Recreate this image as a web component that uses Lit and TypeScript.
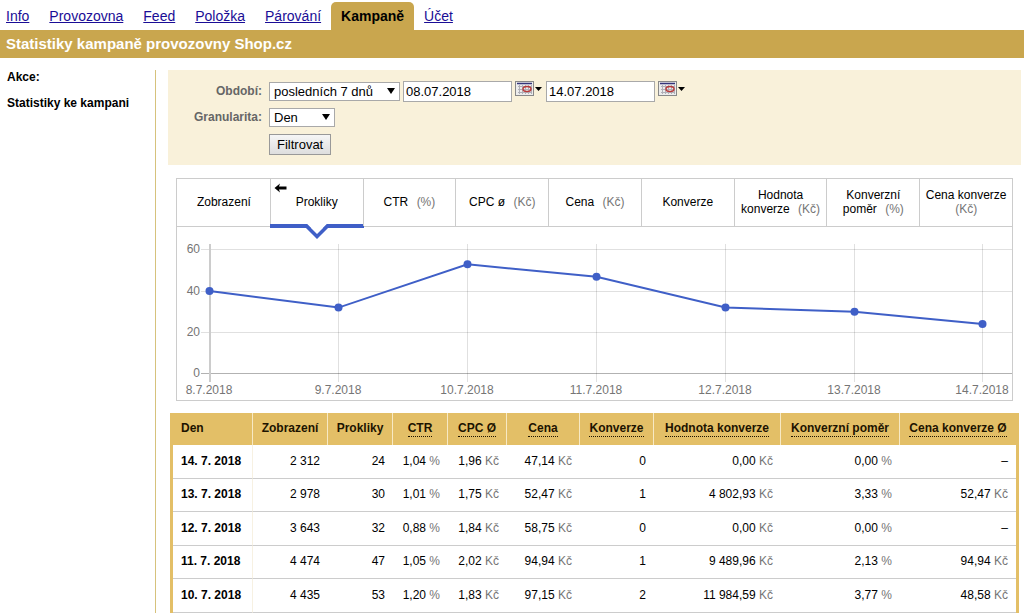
import { LitElement, html, css, svg, nothing } from "lit";
import { customElement, state } from "lit/decorators.js";

interface Metric { lines: string[]; unit?: string; }
interface Column { label: string; hint: boolean; width: number; cls?: string; }

const NAV = ["Info", "Provozovna", "Feed", "Položka", "Párování", "Kampaně", "Účet"];

const METRICS: Metric[] = [
  { lines: ["Zobrazení"] },
  { lines: ["Prokliky"] },
  { lines: ["CTR"], unit: "(%)" },
  { lines: ["CPC ø"], unit: "(Kč)" },
  { lines: ["Cena"], unit: "(Kč)" },
  { lines: ["Konverze"] },
  { lines: ["Hodnota", "konverze"], unit: "(Kč)" },
  { lines: ["Konverzní", "poměr"], unit: "(%)" },
  { lines: ["Cena konverze", ""], unit: "(Kč)" },
];

const COLUMNS: Column[] = [
  { label: "Den", hint: false, width: 80, cls: "left" },
  { label: "Zobrazení", hint: false, width: 75 },
  { label: "Prokliky", hint: false, width: 65 },
  { label: "CTR", hint: true, width: 55 },
  { label: "CPC Ø", hint: true, width: 59 },
  { label: "Cena", hint: true, width: 73 },
  { label: "Konverze", hint: true, width: 74 },
  { label: "Hodnota konverze", hint: true, width: 127 },
  { label: "Konverzní poměr", hint: true, width: 119 },
  { label: "Cena konverze Ø", hint: true, width: 116 },
];
const TOTAL_WIDTH = COLUMNS.reduce((sum, c) => sum + c.width, 0);

const ROWS: string[][] = [
  ["14. 7. 2018", "2 312", "24", "1,04 %", "1,96 Kč", "47,14 Kč", "0", "0,00 Kč", "0,00 %", "–"],
  ["13. 7. 2018", "2 978", "30", "1,01 %", "1,75 Kč", "52,47 Kč", "1", "4 802,93 Kč", "3,33 %", "52,47 Kč"],
  ["12. 7. 2018", "3 643", "32", "0,88 %", "1,84 Kč", "58,75 Kč", "0", "0,00 Kč", "0,00 %", "–"],
  ["11. 7. 2018", "4 474", "47", "1,05 %", "2,02 Kč", "94,94 Kč", "1", "9 489,96 Kč", "2,13 %", "94,94 Kč"],
  ["10. 7. 2018", "4 435", "53", "1,20 %", "1,83 Kč", "97,15 Kč", "2", "11 984,59 Kč", "3,77 %", "48,58 Kč"],
];

const CLICKS = [
  { day: "8.7.2018", value: 40 },
  { day: "9.7.2018", value: 32 },
  { day: "10.7.2018", value: 53 },
  { day: "11.7.2018", value: 47 },
  { day: "12.7.2018", value: 32 },
  { day: "13.7.2018", value: 30 },
  { day: "14.7.2018", value: 24 },
];

@customElement("clicks-chart")
export class ClicksChart extends LitElement {
  static styles = css`
    :host { display: block; }
    .plot { display: block; width: 100%; height: auto; }
    .grid { stroke: #000; stroke-opacity: 0.12; }
    .axis { stroke: #000; stroke-opacity: 0.3; }
    .axis-y { stroke: #ccc; stroke-width: 2; }
    .line { fill: none; stroke: #3f5fc7; stroke-width: 2; }
    .dot { fill: #3f5fc7; }
    .tick { fill: #757575; font: 12px "Liberation Sans", Arial, sans-serif; }
  `;

  render() {
    const x = (i: number) => Math.round(32 + i * 128.9);
    const y = (v: number) => 146.5 - v * 2.06;
    return html`
      <svg class="plot" viewBox="0 0 835 173" role="img" aria-label="Prokliky">
        ${[0, 20, 40, 60].map((v) => svg`
          <line class=${v ? "grid" : "axis"} x1="24" x2="835" y1=${Math.floor(y(v)) + 0.5} y2=${Math.floor(y(v)) + 0.5}></line>
          <text class="tick" x="23" y=${Math.floor(y(v)) + 4} text-anchor="end">${v}</text>`)}
        <line class="axis-y" x1="33" x2="33" y1="17" y2="155"></line>
        ${CLICKS.map((p, i) => svg`
          ${i ? svg`<line class="grid" x1=${x(i) + 0.5} x2=${x(i) + 0.5} y1="17" y2="155"></line>` : nothing}
          <text class="tick" x=${x(i)} y="167" text-anchor="middle">${p.day}</text>`)}
        <polyline class="line" points=${CLICKS.map((p, i) => `${x(i) + 0.5},${y(p.value)}`).join(" ")}></polyline>
        ${CLICKS.map((p, i) => svg`<circle class="dot" cx=${x(i) + 0.5} cy=${y(p.value)} r="4"></circle>`)}
      </svg>`;
  }
}

@customElement("app-root")
export class AppRoot extends LitElement {
  @state() private selected = 1;

  static styles = css`
    :host {
      display: block;
      min-height: 100vh;
      background: #fff;
      color: #000;
      font: 12px/14px "Liberation Sans", Arial, sans-serif;
    }
    *, *::before, *::after { box-sizing: border-box; }
    .nav { display: flex; align-items: flex-end; padding: 2px 0 0 6px; height: 30px; gap: 20px; font-size: 14px; line-height: 28px; }
    .nav a { color: #1a0d96; }
    .nav .current {
      margin: 0 -10px;
      padding: 0 10px;
      border-radius: 5px 5px 0 0;
      background: #c9a64e;
      color: #000;
      font-weight: bold;
      text-decoration: none;
    }
    .title { margin: 0; padding: 0 6px; background: #c9a64e; color: #fff; font-size: 15px; line-height: 28px; }
    .body { display: flex; margin-top: 12px; }
    .side { flex: 0 0 156px; padding: 0 7px; border-right: 1px solid #d6c27c; font-weight: bold; }
    .side h2 { margin: 0 0 12px; font-size: 12px; line-height: 14px; }
    .side a { color: #000; text-decoration: none; }
    .main { flex: 1; min-width: 0; padding: 0 3px 0 12px; }
    .filter {
      display: grid;
      grid-template-columns: 94px 1fr;
      grid-template-rows: 22px 20px 24px;
      gap: 5px 7px;
      align-items: center;
      height: 95px;
      padding-top: 10px;
      align-content: start;
      background: #f9f1da;
    }
    .filter label { color: #666; font-weight: bold; text-align: right; }
    .fields { display: flex; align-items: center; gap: 3px; }
    .fields input, .fields select, .fields button { font: 13px "Liberation Sans", Arial, sans-serif; color: #000; }
    .pick { position: relative; display: flex; }
    .pick::after {
      content: "";
      position: absolute;
      right: 5px;
      top: 6px;
      border: 4px solid transparent;
      border-top: 6px solid #000;
      border-bottom: 0;
      pointer-events: none;
    }
    .pick select { appearance: none; height: 19px; padding: 0 4px; border: 1px solid #a9a9a9; border-radius: 0; background: #fff; }
    .period { width: 131px; }
    .step { width: 66px; }
    .date { width: 109px; height: 21px; padding: 0 2px; border: 1px solid #a9a9a9; }
    .calendar { display: flex; margin: -5px 0 0; padding: 0; border: 0; background: none; }
    .submit { height: 21px; padding: 0 7px; border: 1px solid #999; background: linear-gradient(#f6f6f6, #dedede); }
    .panel { margin: 13px 8px 12px; border: 1px solid #ccc; }
    .tabs { display: flex; height: 48px; border-bottom: 1px solid #ccc; }
    .tab {
      position: relative;
      flex: 1 1 0;
      min-width: 0;
      padding: 0 0 2px;
      border: 0;
      border-left: 1px solid #ccc;
      background: none;
      color: #000;
      font: 12px/14px "Liberation Sans", Arial, sans-serif;
      white-space: nowrap;
    }
    .tab:first-child { border-left-color: transparent; }
    .unit { color: #757575; }
    .word + .unit { margin-left: 5px; }
    .arrow { position: absolute; left: 3px; top: 4px; }
    .notch { position: absolute; left: 50%; bottom: -13px; margin-left: -12px; }
    .bar { position: absolute; left: -1px; right: -1px; bottom: -2px; height: 4px; background: #3f5fc7; }
    .data { width: calc(100% - 4px); margin: 0 2px; border-collapse: separate; border-spacing: 0; table-layout: fixed; border: solid #e3bf67; border-width: 0 3px; }
    .data th, .data td { padding: 0 8px 2px; text-align: right; white-space: nowrap; }
    .data thead th { height: 32px; padding: 0 0 2px; background: #e3bf67; border-right: 1px solid #f7e9c4; text-align: center; color: #1d1300; }
    .data thead th:last-child { border-right: 0; }
    .data .left, .data thead .left { padding-left: 8px; text-align: left; }
    .data tbody tr { height: 34px; }
    .data tbody tr:nth-child(even) { height: 33px; }
    .data tbody td, .data tbody th { border-bottom: 1px solid #ccc; }
    .data tbody th { border-right: 1px solid #f7f1e2; }
    .hint { border-bottom: 1px dotted #1d1300; padding-bottom: 1px; }
  `;

  private calendar(label: string) {
    return html`<button class="calendar" type="button" aria-label=${label}>
      <svg width="28" height="15" viewBox="0 0 28 15">
        <rect x="0.5" y="0.5" width="18" height="14" fill="#ececec" stroke="#888"></rect>
        <path d="M2 2.5h15" stroke="#35357a" stroke-width="1.5"></path>
        <path d="M3 5.5h14M3 8.5h14M3 11.5h14M4.5 4v9M7.5 4v9M10.5 4v9M13.5 4v9M16.5 4v9" stroke="#b0b0b8"></path>
        <ellipse cx="12" cy="8" rx="4" ry="2.5" fill="none" stroke="#b83a3a" stroke-width="1.4"></ellipse>
        <path d="M20 6h7l-3.500 4z" fill="#000"></path>
      </svg>
    </button>`;
  }

  private metric(m: Metric, i: number) {
    const on = i === this.selected;
    return html`<button class="tab" type="button" aria-pressed=${on} @click=${() => (this.selected = i)}>
      ${m.lines.map((line, n) => html`${n ? html`<br>` : nothing}${line ? html`<span class="word">${line}</span>` : nothing}`)}
      ${m.unit ? html`<span class="unit">${m.unit}</span>` : nothing}
      ${on ? html`
        <svg class="arrow" width="13" height="10" viewBox="0 0 13 10"><path d="M0.500 5L6 0.500L5 3.500H12.500V6.500H5L6 9.500Z" fill="#000"></path></svg>
        <span class="bar"></span>
        <svg class="notch" width="24" height="15" viewBox="0 0 24 15">
          <path d="M2 0H22L12 10Z" fill="#fff"></path>
          <path d="M1 1.500L12 12.500L23 1.500" fill="none" stroke="#3f5fc7" stroke-width="3.500"></path>
        </svg>` : nothing}
    </button>`;
  }

  private cell(text: string) {
    const parts = text.match(/^(.*) (Kč|%)$/);
    return parts ? html`${parts[1]} <span class="unit">${parts[2]}</span>` : text;
  }

  render() {
    return html`
      <nav class="nav">
        ${NAV.map((n) => html`<a href="#" class=${n === "Kampaně" ? "current" : ""}>${n}</a>`)}
      </nav>
      <h1 class="title">Statistiky kampaně provozovny Shop.cz</h1>
      <div class="body">
        <aside class="side">
          <h2>Akce:</h2>
          <a href="#">Statistiky ke kampani</a>
        </aside>
        <main class="main">
          <form class="filter" @submit=${(e: Event) => e.preventDefault()}>
            <label for="period">Období:</label>
            <div class="fields">
              <span class="pick"><select id="period" class="period"><option>posledních 7 dnů</option></select></span>
              <input class="date" type="text" aria-label="Od" value="08.07.2018">
              ${this.calendar("Vybrat datum od")}
              <input class="date" type="text" aria-label="Do" value="14.07.2018">
              ${this.calendar("Vybrat datum do")}
            </div>
            <label for="step">Granularita:</label>
            <div class="fields"><span class="pick"><select id="step" class="step"><option>Den</option></select></span></div>
            <span></span>
            <div class="fields"><button class="submit" type="submit">Filtrovat</button></div>
          </form>
          <section class="panel">
            <div class="tabs">${METRICS.map((m, i) => this.metric(m, i))}</div>
            <clicks-chart></clicks-chart>
          </section>
          <table class="data">
            <colgroup>${COLUMNS.map((c) => html`<col style="width:${(c.width / TOTAL_WIDTH) * 100}%">`)}</colgroup>
            <thead>
              <tr>${COLUMNS.map((c) => html`<th scope="col" class=${c.cls ?? ""}>${c.hint ? html`<span class="hint">${c.label}</span>` : c.label}</th>`)}</tr>
            </thead>
            <tbody>
              ${ROWS.map((r) => html`<tr>
                <th scope="row" class="left">${r[0]}</th>
                ${r.slice(1).map((v) => html`<td>${this.cell(v)}</td>`)}
              </tr>`)}
            </tbody>
          </table>
        </main>
      </div>`;
  }
}
